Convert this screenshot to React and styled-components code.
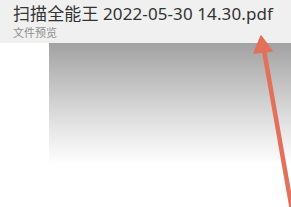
import React from "react";
import styled, { createGlobalStyle } from "styled-components";

const Global = createGlobalStyle`
  html, body { margin: 0; padding: 0; background: #fff; }
  body { width: 291px; height: 207px; overflow: hidden; }
`;

const Page = styled.div`
  position: relative;
  width: 291px;
  height: 207px;
  display: flex;
  flex-direction: column;
  background: #fff;
  font-family: "Noto Sans", "Noto Sans CJK SC", sans-serif;
`;

const Header = styled.div`
  height: 43px;
  box-sizing: border-box;
  padding: 2px 0 0 13px;
  background: #f0f0f0;
  display: flex;
  flex-direction: column;
`;

const Title = styled.div`
  font-size: 17px;
  line-height: 23px;
  letter-spacing: 0.1px;
  color: #333;
  white-space: nowrap;
`;

const Sub = styled.div`
  margin-top: 1px;
  font-size: 11px;
  line-height: 14px;
  color: #8e8e8e;
`;

const Body = styled.div`
  flex: 1;
  display: flex;
  padding-left: 49px;
`;

const Preview = styled.div`
  flex: 1;
  height: 122px;
  background: linear-gradient(#a2a2a2 0%, #c4c4c4 35%, #e6e6e6 70%, #fff 100%);
`;

const Arrow = styled.svg`
  position: absolute;
  left: 0;
  top: 0;
  pointer-events: none;
`;

export default function App() {
  return (
    <Page>
      <Global />
      <Header>
        <Title>扫描全能王 2022-05-30 14.30.pdf</Title>
        <Sub>文件预览</Sub>
      </Header>
      <Body>
        <Preview />
      </Body>
      <Arrow width="291" height="207" viewBox="0 0 291 207">
        <line x1="292" y1="210" x2="264" y2="50" stroke="#e3705a" strokeWidth="4.5" strokeLinecap="round" />
        <polygon points="261,36 254,53 272,51" fill="#e3705a" strokeLinejoin="round" stroke="#e3705a" strokeWidth="1.5" />
      </Arrow>
    </Page>
  );
}
